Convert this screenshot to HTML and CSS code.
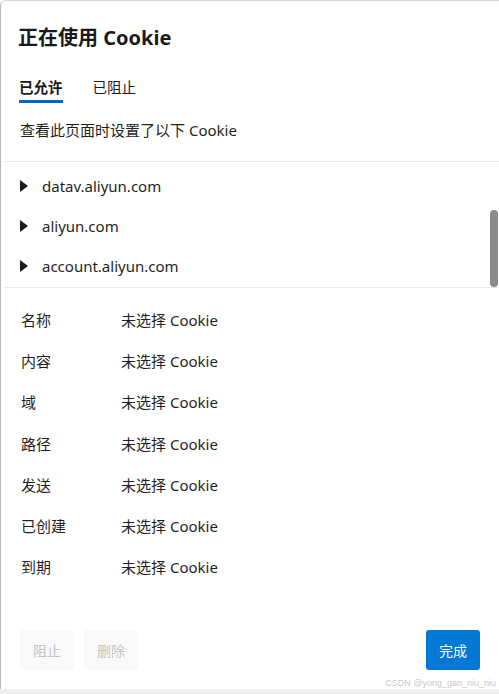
FILE: index.html
```html
<!DOCTYPE html>
<html lang="zh-CN">
<head>
    <meta charset="UTF-8">
    <meta name="viewport" content="width=device-width, initial-scale=1.0">
    <title>正在使用 Cookie</title>
    <link rel="stylesheet" href="styles.css">
</head>
<body>
    <div class="dialog">
        <h1 class="title">正在使用 Cookie</h1>

        <div class="tabs">
            <span class="tab active">已允许</span>
            <span class="tab">已阻止</span>
        </div>

        <p class="intro">查看此页面时设置了以下 Cookie</p>

        <div class="site-list">
            <div class="site">
                <svg class="arrow" width="8" height="12" viewBox="0 0 8 12"><path d="M0 0 L8 6 L0 12 Z" fill="#1a1a1a"/></svg>
                <span>datav.aliyun.com</span>
            </div>
            <div class="site">
                <svg class="arrow" width="8" height="12" viewBox="0 0 8 12"><path d="M0 0 L8 6 L0 12 Z" fill="#1a1a1a"/></svg>
                <span>aliyun.com</span>
            </div>
            <div class="site">
                <svg class="arrow" width="8" height="12" viewBox="0 0 8 12"><path d="M0 0 L8 6 L0 12 Z" fill="#1a1a1a"/></svg>
                <span>account.aliyun.com</span>
            </div>
            <div class="scroll-thumb"></div>
        </div>

        <div class="details">
            <div class="row"><span class="label">名称</span><span class="value">未选择 Cookie</span></div>
            <div class="row"><span class="label">内容</span><span class="value">未选择 Cookie</span></div>
            <div class="row"><span class="label">域</span><span class="value">未选择 Cookie</span></div>
            <div class="row"><span class="label">路径</span><span class="value">未选择 Cookie</span></div>
            <div class="row"><span class="label">发送</span><span class="value">未选择 Cookie</span></div>
            <div class="row"><span class="label">已创建</span><span class="value">未选择 Cookie</span></div>
            <div class="row"><span class="label">到期</span><span class="value">未选择 Cookie</span></div>
        </div>

        <div class="footer">
            <button class="btn btn-disabled">阻止</button>
            <button class="btn btn-disabled">删除</button>
            <button class="btn btn-primary">完成</button>
        </div>

        <div class="watermark">CSDN @yong_gan_niu_niu</div>
    </div>
    <div class="bottom-strip"></div>
</body>
</html>
```

FILE: styles.css
```css
body {
    margin: 0;
    padding: 0;
    background: #fff;
    font-family: "Noto Sans", "Noto Sans CJK SC", sans-serif;
    color: #1f1f1f;
}
.dialog {
    position: relative;
    height: 689px;
    box-sizing: border-box;
    border-left: 1px solid #b9b9b9;
    border-top: 1px solid #d8d8d8;
    border-top-left-radius: 6px;
    display: flex;
    flex-direction: column;
    overflow: hidden;
}
.title {
    margin: 0;
    padding: 23px 0 0 17px;
    font-size: 20px;
    line-height: 28px;
    font-weight: 700;
    color: #1a1a1a;
}
.tabs {
    display: flex;
    gap: 30px;
    margin: 25px 0 0 18px;
}
.tab {
    font-size: 14.5px;
    line-height: 20px;
    padding-bottom: 3px;
    border-bottom: 3px solid transparent;
    color: #1a1a1a;
}
.tab.active {
    font-weight: 700;
    border-bottom-color: #0067c0;
}
.intro {
    margin: 17px 0 0 19px;
    font-size: 15px;
    line-height: 20px;
    color: #1f1f1f;
}
.site-list {
    position: relative;
    margin: 21px 0 0 4px;
    padding: 4px 0 1px;
    border-top: 1px solid #e8e8e8;
    border-bottom: 1px solid #e8e8e8;
}
.site {
    display: flex;
    align-items: center;
    height: 40px;
    padding-left: 15px;
    font-size: 15px;
    color: #1f1f1f;
}
.arrow {
    margin-right: 14px;
}
.scroll-thumb {
    position: absolute;
    right: 1px;
    top: 48px;
    width: 8px;
    height: 77px;
    background: #8a8a8a;
    border-radius: 4px;
}
.details {
    padding: 11px 0 0 20px;
}
.row {
    display: flex;
    align-items: center;
    height: 41.2px;
    font-size: 15px;
}
.label {
    width: 100px;
    color: #1f1f1f;
}
.value {
    color: #1f1f1f;
}
.footer {
    margin-top: auto;
    display: flex;
    gap: 10px;
    padding: 0 19px 19px 19px;
}
.btn {
    height: 40px;
    width: 54px;
    border: none;
    border-radius: 3px;
    font-family: "Noto Sans", "Noto Sans CJK SC", sans-serif;
    font-size: 14px;
    cursor: pointer;
}
.btn-disabled {
    background: #f9f9f9;
    color: #c4c4c4;
}
.btn-primary {
    margin-left: auto;
    background: #0078d4;
    color: #fff;
}
.watermark {
    position: absolute;
    right: 3px;
    bottom: 1px;
    font-family: "Liberation Sans", sans-serif;
    font-size: 9px;
    color: #c8c8c8;
}
.bottom-strip {
    height: 5px;
    background: #f0f0f0;
}
```
